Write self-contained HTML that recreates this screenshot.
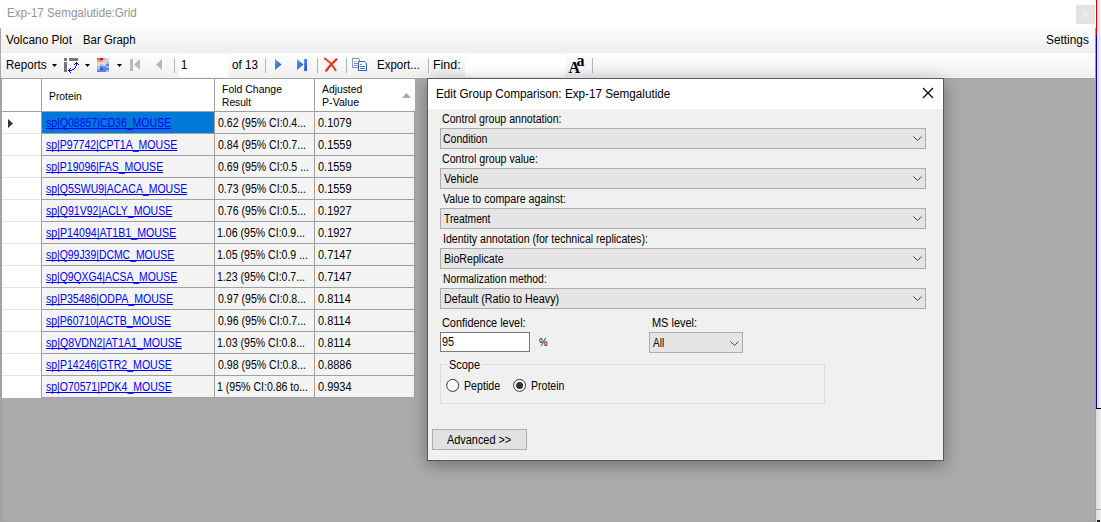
<!DOCTYPE html>
<html><head><meta charset="utf-8"><style>
html,body{margin:0;padding:0;width:1101px;height:522px;overflow:hidden;background:#fff;position:relative}
.t{position:absolute;white-space:pre;font-family:"Liberation Sans",sans-serif;transform-origin:0 0}
.r{position:absolute}
.clip{position:absolute;overflow:hidden}
</style></head><body>
<div class="r" style="left:1076px;top:5px;width:19px;height:19px;background:#e3e3e3"></div>
<svg class="r" style="left:1076px;top:5px" width="19" height="19"><path d="M7 7 L12 12 M12 7 L7 12" stroke="#f2f2f2" stroke-width="1.4"/></svg>
<div class="t" style="top:6.84px;font-size:12px;line-height:12px;color:#959595;left:7.43px;transform:scaleX(0.9679);">Exp-17 Semgalutide:Grid</div>
<div class="r" style="left:1095px;top:28px;width:1px;height:494px;background:#a0a0a0"></div>
<div class="r" style="left:1096px;top:0px;width:1px;height:35px;background:#d00000"></div>
<div class="r" style="left:1096px;top:35px;width:1px;height:373px;background:#0000c8"></div>
<div class="r" style="left:1097px;top:0px;width:4px;height:408px;background:linear-gradient(90deg,#e2e2e2,#f0f0f0)"></div>
<div class="r" style="left:1096px;top:408px;width:5px;height:1px;background:#000"></div>
<div class="r" style="left:1096px;top:409px;width:5px;height:113px;background:linear-gradient(90deg,#dcdcdc,#f0f0f0)"></div>
<div class="r" style="left:1096px;top:509px;width:5px;height:1px;background:#a8a8a8"></div>
<div class="r" style="left:1097px;top:520px;width:3px;height:2px;background:#202020"></div>
<div class="r" style="left:0px;top:28px;width:1095px;height:1px;background:rgb(251,251,251)"></div>
<div class="r" style="left:0px;top:29px;width:1095px;height:1px;background:rgb(251,251,251)"></div>
<div class="r" style="left:0px;top:30px;width:1095px;height:1px;background:rgb(250,250,250)"></div>
<div class="r" style="left:0px;top:31px;width:1095px;height:1px;background:rgb(250,250,250)"></div>
<div class="r" style="left:0px;top:32px;width:1095px;height:1px;background:rgb(249,249,249)"></div>
<div class="r" style="left:0px;top:33px;width:1095px;height:1px;background:rgb(249,249,249)"></div>
<div class="r" style="left:0px;top:34px;width:1095px;height:1px;background:rgb(248,248,248)"></div>
<div class="r" style="left:0px;top:35px;width:1095px;height:1px;background:rgb(248,248,248)"></div>
<div class="r" style="left:0px;top:36px;width:1095px;height:1px;background:rgb(248,248,248)"></div>
<div class="r" style="left:0px;top:37px;width:1095px;height:1px;background:rgb(247,247,247)"></div>
<div class="r" style="left:0px;top:38px;width:1095px;height:1px;background:rgb(247,247,247)"></div>
<div class="r" style="left:0px;top:39px;width:1095px;height:1px;background:rgb(246,246,246)"></div>
<div class="r" style="left:0px;top:40px;width:1095px;height:1px;background:rgb(246,246,246)"></div>
<div class="r" style="left:0px;top:41px;width:1095px;height:1px;background:rgb(245,245,245)"></div>
<div class="r" style="left:0px;top:42px;width:1095px;height:1px;background:rgb(245,245,245)"></div>
<div class="r" style="left:0px;top:43px;width:1095px;height:1px;background:rgb(244,244,244)"></div>
<div class="r" style="left:0px;top:44px;width:1095px;height:1px;background:rgb(243,243,243)"></div>
<div class="r" style="left:0px;top:45px;width:1095px;height:1px;background:rgb(243,243,243)"></div>
<div class="r" style="left:0px;top:46px;width:1095px;height:1px;background:rgb(242,242,242)"></div>
<div class="r" style="left:0px;top:47px;width:1095px;height:1px;background:rgb(241,241,241)"></div>
<div class="r" style="left:0px;top:48px;width:1095px;height:1px;background:rgb(241,241,241)"></div>
<div class="r" style="left:0px;top:49px;width:1095px;height:1px;background:rgb(240,240,240)"></div>
<div class="r" style="left:0px;top:50px;width:1095px;height:1px;background:rgb(239,239,239)"></div>
<div class="r" style="left:0px;top:51px;width:1095px;height:1px;background:rgb(239,239,239)"></div>
<div class="r" style="left:0px;top:52px;width:1095px;height:1px;background:rgb(238,238,238)"></div>
<div class="t" style="top:33.84px;font-size:12px;line-height:12px;color:#000;left:6.10px;transform:scaleX(0.9888);">Volcano Plot</div>
<div class="t" style="top:33.84px;font-size:12px;line-height:12px;color:#000;left:82.55px;transform:scaleX(0.9488);">Bar Graph</div>
<div class="t" style="top:33.54px;font-size:12px;line-height:12px;color:#000;left:1045.51px;transform:scaleX(0.9882);">Settings</div>
<div class="r" style="left:0px;top:53px;width:1095px;height:1px;background:rgb(252,252,252)"></div>
<div class="r" style="left:0px;top:54px;width:1095px;height:1px;background:rgb(252,252,252)"></div>
<div class="r" style="left:0px;top:55px;width:1095px;height:1px;background:rgb(251,251,251)"></div>
<div class="r" style="left:0px;top:56px;width:1095px;height:1px;background:rgb(251,251,251)"></div>
<div class="r" style="left:0px;top:57px;width:1095px;height:1px;background:rgb(250,250,250)"></div>
<div class="r" style="left:0px;top:58px;width:1095px;height:1px;background:rgb(250,250,250)"></div>
<div class="r" style="left:0px;top:59px;width:1095px;height:1px;background:rgb(250,250,250)"></div>
<div class="r" style="left:0px;top:60px;width:1095px;height:1px;background:rgb(249,249,249)"></div>
<div class="r" style="left:0px;top:61px;width:1095px;height:1px;background:rgb(249,249,249)"></div>
<div class="r" style="left:0px;top:62px;width:1095px;height:1px;background:rgb(248,248,248)"></div>
<div class="r" style="left:0px;top:63px;width:1095px;height:1px;background:rgb(248,248,248)"></div>
<div class="r" style="left:0px;top:64px;width:1095px;height:1px;background:rgb(247,247,247)"></div>
<div class="r" style="left:0px;top:65px;width:1095px;height:1px;background:rgb(247,247,247)"></div>
<div class="r" style="left:0px;top:66px;width:1095px;height:1px;background:rgb(246,246,246)"></div>
<div class="r" style="left:0px;top:67px;width:1095px;height:1px;background:rgb(246,246,246)"></div>
<div class="r" style="left:0px;top:68px;width:1095px;height:1px;background:rgb(245,245,245)"></div>
<div class="r" style="left:0px;top:69px;width:1095px;height:1px;background:rgb(244,244,244)"></div>
<div class="r" style="left:0px;top:70px;width:1095px;height:1px;background:rgb(244,244,244)"></div>
<div class="r" style="left:0px;top:71px;width:1095px;height:1px;background:rgb(243,243,243)"></div>
<div class="r" style="left:0px;top:72px;width:1095px;height:1px;background:rgb(242,242,242)"></div>
<div class="r" style="left:0px;top:73px;width:1095px;height:1px;background:rgb(242,242,242)"></div>
<div class="r" style="left:0px;top:74px;width:1095px;height:1px;background:rgb(241,241,241)"></div>
<div class="r" style="left:0px;top:75px;width:1095px;height:1px;background:rgb(240,240,240)"></div>
<div class="r" style="left:0px;top:76px;width:1095px;height:1px;background:rgb(240,240,240)"></div>
<div class="r" style="left:0px;top:77px;width:1095px;height:1px;background:rgb(246,246,246)"></div>
<div class="r" style="left:0px;top:28px;width:1px;height:50px;background:#a8a8a8"></div>
<div class="r" style="left:0px;top:78px;width:1095px;height:1px;background:#a0a0a0"></div>
<div class="t" style="top:58.64px;font-size:12px;line-height:12px;color:#000;left:6.04px;transform:scaleX(0.9630);">Reports</div>
<svg class="r" style="left:52px;top:64px" width="5" height="3"><path d="M0 0H5L2.5 3Z" fill="#000"/></svg>
<svg class="r" style="left:85px;top:64px" width="5" height="3"><path d="M0 0H5L2.5 3Z" fill="#000"/></svg>
<svg class="r" style="left:117px;top:64px" width="5" height="3"><path d="M0 0H5L2.5 3Z" fill="#000"/></svg>
<div class="r" style="left:64px;top:58px;width:3px;height:3px;background:#777"></div>
<div class="r" style="left:64px;top:62px;width:3px;height:10px;background:#777"></div>
<div class="r" style="left:69px;top:58px;width:9px;height:3px;background:#777"></div>
<svg class="r" style="left:66px;top:60px" width="14" height="14" shape-rendering="crispEdges"><g fill="#0000ff"><rect x="10" y="2" width="1" height="1"/><rect x="10" y="3" width="1" height="1"/><rect x="9" y="3" width="1" height="1"/><rect x="11" y="3" width="1" height="1"/><rect x="8" y="4" width="1" height="1"/><rect x="10" y="4" width="1" height="1"/><rect x="12" y="4" width="1" height="1"/><rect x="10" y="5" width="1" height="1"/><rect x="9" y="6" width="1" height="1"/><rect x="9" y="7" width="1" height="1"/><rect x="8" y="8" width="1" height="1"/><rect x="7" y="9" width="1" height="1"/><rect x="6" y="9" width="1" height="1"/><rect x="5" y="10" width="1" height="1"/><rect x="4" y="10" width="1" height="1"/><rect x="3" y="10" width="1" height="1"/><rect x="2" y="10" width="1" height="1"/><rect x="4" y="8" width="1" height="1"/><rect x="3" y="9" width="1" height="1"/><rect x="3" y="11" width="1" height="1"/><rect x="4" y="12" width="1" height="1"/></g></svg>
<div class="r" style="left:97px;top:58px;width:3px;height:2px;background:#e06a48"></div>
<div class="r" style="left:100px;top:58px;width:3px;height:2px;background:#c4102c"></div>
<div class="r" style="left:103px;top:58px;width:3px;height:2px;background:#f4a888"></div>
<div class="r" style="left:106px;top:58px;width:3px;height:2px;background:#dcdcdc"></div>
<div class="r" style="left:97px;top:60px;width:3px;height:2px;background:#f09878"></div>
<div class="r" style="left:100px;top:60px;width:3px;height:2px;background:#f09878"></div>
<div class="r" style="left:103px;top:60px;width:3px;height:2px;background:#f8c8b0"></div>
<div class="r" style="left:106px;top:60px;width:3px;height:2px;background:#c4d8f8"></div>
<div class="r" style="left:97px;top:62px;width:3px;height:2px;background:#e8d4cc"></div>
<div class="r" style="left:100px;top:62px;width:3px;height:2px;background:#dcdcdc"></div>
<div class="r" style="left:103px;top:62px;width:3px;height:2px;background:#dcdcdc"></div>
<div class="r" style="left:106px;top:62px;width:3px;height:2px;background:#a8c4f4"></div>
<div class="r" style="left:97px;top:64px;width:3px;height:2px;background:#dcdcdc"></div>
<div class="r" style="left:100px;top:64px;width:3px;height:2px;background:#a4c0f4"></div>
<div class="r" style="left:103px;top:64px;width:3px;height:2px;background:#c4d8f8"></div>
<div class="r" style="left:106px;top:64px;width:3px;height:2px;background:#5484e4"></div>
<div class="r" style="left:97px;top:66px;width:3px;height:2px;background:#a4c0f4"></div>
<div class="r" style="left:100px;top:66px;width:3px;height:2px;background:#5484e4"></div>
<div class="r" style="left:103px;top:66px;width:3px;height:2px;background:#6890e8"></div>
<div class="r" style="left:106px;top:66px;width:3px;height:2px;background:#a4c0f4"></div>
<div class="r" style="left:97px;top:68px;width:3px;height:2px;background:#94b8f4"></div>
<div class="r" style="left:100px;top:68px;width:3px;height:2px;background:#3454c8"></div>
<div class="r" style="left:103px;top:68px;width:3px;height:2px;background:#6a84c4"></div>
<div class="r" style="left:106px;top:68px;width:3px;height:2px;background:#5484e4"></div>
<div class="r" style="left:97px;top:70px;width:3px;height:2px;background:#5484e4"></div>
<div class="r" style="left:100px;top:70px;width:3px;height:2px;background:#5484e4"></div>
<div class="r" style="left:103px;top:70px;width:3px;height:2px;background:#5484e4"></div>
<div class="r" style="left:106px;top:70px;width:3px;height:2px;background:#a4c0f4"></div>
<svg class="r" style="left:129px;top:58px" width="36" height="14"><rect x="1" y="1" width="3" height="12" fill="#b8b8b8"/><path d="M5 6.5 L11 1 V12 Z" fill="#b8b8b8"/><path d="M27 6.5 L33 1 V12 Z" fill="#b8b8b8"/></svg>
<div class="r" style="left:174px;top:58px;width:1px;height:15px;background:#b4b4b4"></div>
<div class="r" style="left:178px;top:54px;width:50px;height:23px;background:#fff"></div>
<div class="t" style="top:58.54px;font-size:12px;line-height:12px;color:#000;left:180.80px;">1</div>
<div class="t" style="top:58.54px;font-size:12px;line-height:12px;color:#000;left:232.21px;transform:scaleX(0.9709);">of 13</div>
<div class="r" style="left:265px;top:58px;width:1px;height:15px;background:#b4b4b4"></div>
<svg class="r" style="left:274px;top:58px" width="36" height="14"><defs><linearGradient id="bg1" x1="0" y1="0" x2="1" y2="1"><stop offset="0" stop-color="#6aa0f0"/><stop offset="1" stop-color="#1848c0"/></linearGradient></defs><path d="M1 1 L7.5 6.5 L1 12 Z" fill="url(#bg1)"/><path d="M23 1 L29.5 6.5 L23 12 Z" fill="url(#bg1)"/><rect x="30" y="1" width="3" height="12" fill="url(#bg1)"/></svg>
<div class="r" style="left:317px;top:58px;width:1px;height:15px;background:#b4b4b4"></div>
<svg class="r" style="left:323px;top:57px" width="15" height="16"><path d="M1.8 1.5 Q8.5 6 12.6 13.2" stroke="#f03818" stroke-width="2" fill="none" stroke-linecap="round"/><path d="M13.4 2.4 Q8 7 3.2 13.6" stroke="#f03010" stroke-width="2.3" fill="none" stroke-linecap="round"/></svg>
<div class="r" style="left:346px;top:58px;width:1px;height:15px;background:#b4b4b4"></div>
<svg class="r" style="left:352px;top:58px" width="16" height="14" shape-rendering="crispEdges"><path d="M0.5 0.5 H6.5 L7.5 1.5 V9.5 H0.5 Z" fill="#fcfcfc" stroke="#8494b4"/><rect x="2" y="3" width="2" height="1" fill="#8ab0e8"/><rect x="2" y="5" width="5" height="1" fill="#6a98e0"/><rect x="2" y="7" width="5" height="1" fill="#6a98e0"/><path d="M6.5 3.5 H12.5 L14.5 5.5 V12.5 H6.5 Z" fill="#fcfcfc" stroke="#3a62c0"/><rect x="8" y="6" width="2" height="1" fill="#6a98e0"/><rect x="8" y="8" width="5" height="1" fill="#4a7ad8"/><rect x="8" y="10" width="5" height="1" fill="#4a7ad8"/></svg>
<div class="t" style="top:58.64px;font-size:12px;line-height:12px;color:#000;left:376.74px;transform:scaleX(0.9591);">Export...</div>
<div class="r" style="left:428px;top:58px;width:1px;height:15px;background:#b4b4b4"></div>
<div class="t" style="top:58.64px;font-size:12px;line-height:12px;color:#000;left:432.97px;transform:scaleX(1.0343);">Find:</div>
<div class="r" style="left:465px;top:54px;width:100px;height:23px;background:#fff"></div>
<div class="t" style="left:568.5px;top:59.5px;font-family:'Liberation Serif',serif;font-weight:bold;font-size:16px;line-height:16px;color:#000">A</div>
<div class="t" style="left:576.5px;top:52.5px;font-family:'Liberation Serif',serif;font-weight:bold;font-size:16px;line-height:16px;color:#000">a</div>
<div class="r" style="left:592px;top:58px;width:1px;height:15px;background:#b4b4b4"></div>
<div class="r" style="left:0px;top:79px;width:1095px;height:443px;background:#ababab"></div>
<div class="r" style="left:0px;top:79px;width:2px;height:443px;background:#a2a2a2"></div>
<div class="r" style="left:0px;top:521px;width:1095px;height:1px;background:#a4a4a4"></div>
<div class="r" style="left:2px;top:79px;width:413px;height:32px;background:#fff"></div>
<div class="r" style="left:2px;top:111px;width:413px;height:1px;background:#a0a0a0"></div>
<div class="r" style="left:41px;top:79px;width:1px;height:318px;background:#a0a0a0"></div>
<div class="r" style="left:214px;top:79px;width:1px;height:318px;background:#a0a0a0"></div>
<div class="r" style="left:314px;top:79px;width:1px;height:318px;background:#a0a0a0"></div>
<div class="r" style="left:414px;top:112px;width:1px;height:285px;background:#a0a0a0"></div>
<div class="t" style="top:91.07px;font-size:11.5px;line-height:11.5px;color:#000;left:49.00px;transform:scaleX(0.9007);">Protein</div>
<div class="t" style="top:84.07px;font-size:11.5px;line-height:11.5px;color:#000;left:221.69px;transform:scaleX(0.9105);">Fold Change</div>
<div class="t" style="top:96.67px;font-size:11.5px;line-height:11.5px;color:#000;left:221.71px;transform:scaleX(0.8889);">Result</div>
<div class="t" style="top:84.07px;font-size:11.5px;line-height:11.5px;color:#000;left:322.30px;transform:scaleX(0.8977);">Adjusted</div>
<div class="t" style="top:96.67px;font-size:11.5px;line-height:11.5px;color:#000;left:321.68px;transform:scaleX(0.9247);">P-Value</div>
<svg class="r" style="left:402px;top:93px" width="10" height="5"><path d="M0 5 L4.5 0 L9 5 Z" fill="#a8a8a8"/></svg>
<div class="r" style="left:2px;top:112px;width:39px;height:21px;background:#fff"></div>
<div class="r" style="left:42px;top:112px;width:172px;height:21px;background:#0078d7"></div>
<div class="r" style="left:215px;top:112px;width:99px;height:21px;background:#f4f4f4"></div>
<div class="r" style="left:315px;top:112px;width:99px;height:21px;background:#f4f4f4"></div>
<div class="r" style="left:2px;top:133px;width:39px;height:1px;background:#e4e4e4"></div>
<div class="r" style="left:42px;top:133px;width:372px;height:1px;background:#a0a0a0"></div>
<div class="t" style="top:116.54px;font-size:12px;line-height:12px;color:#0000ff;left:45.58px;transform:scaleX(0.8752);text-decoration:underline;text-decoration-skip-ink:none;text-underline-offset:1px">sp|Q08857|CD36_MOUSE</div>
<div class="t" style="top:116.74px;font-size:12px;line-height:12px;color:#000;left:217.56px;transform:scaleX(0.8800);">0.62 (95% CI:0.4...</div>
<div class="t" style="top:116.74px;font-size:12px;line-height:12px;color:#000;left:317.74px;transform:scaleX(0.9140);">0.1079</div>
<div class="r" style="left:2px;top:134px;width:39px;height:21px;background:#fff"></div>
<div class="r" style="left:42px;top:134px;width:172px;height:21px;background:#f4f4f4"></div>
<div class="r" style="left:215px;top:134px;width:99px;height:21px;background:#f4f4f4"></div>
<div class="r" style="left:315px;top:134px;width:99px;height:21px;background:#f4f4f4"></div>
<div class="r" style="left:2px;top:155px;width:39px;height:1px;background:#e4e4e4"></div>
<div class="r" style="left:42px;top:155px;width:372px;height:1px;background:#a0a0a0"></div>
<div class="t" style="top:138.54px;font-size:12px;line-height:12px;color:#0000ff;left:45.58px;transform:scaleX(0.8765);text-decoration:underline;text-decoration-skip-ink:none;text-underline-offset:1px">sp|P97742|CPT1A_MOUSE</div>
<div class="t" style="top:138.74px;font-size:12px;line-height:12px;color:#000;left:217.56px;transform:scaleX(0.8800);">0.84 (95% CI:0.7...</div>
<div class="t" style="top:138.74px;font-size:12px;line-height:12px;color:#000;left:317.74px;transform:scaleX(0.9140);">0.1559</div>
<div class="r" style="left:2px;top:156px;width:39px;height:21px;background:#fff"></div>
<div class="r" style="left:42px;top:156px;width:172px;height:21px;background:#f4f4f4"></div>
<div class="r" style="left:215px;top:156px;width:99px;height:21px;background:#f4f4f4"></div>
<div class="r" style="left:315px;top:156px;width:99px;height:21px;background:#f4f4f4"></div>
<div class="r" style="left:2px;top:177px;width:39px;height:1px;background:#e4e4e4"></div>
<div class="r" style="left:42px;top:177px;width:372px;height:1px;background:#a0a0a0"></div>
<div class="t" style="top:160.54px;font-size:12px;line-height:12px;color:#0000ff;left:45.58px;transform:scaleX(0.8767);text-decoration:underline;text-decoration-skip-ink:none;text-underline-offset:1px">sp|P19096|FAS_MOUSE</div>
<div class="t" style="top:160.74px;font-size:12px;line-height:12px;color:#000;left:217.56px;transform:scaleX(0.8800);">0.69 (95% CI:0.5 ...</div>
<div class="t" style="top:160.74px;font-size:12px;line-height:12px;color:#000;left:317.74px;transform:scaleX(0.9140);">0.1559</div>
<div class="r" style="left:2px;top:178px;width:39px;height:21px;background:#fff"></div>
<div class="r" style="left:42px;top:178px;width:172px;height:21px;background:#f4f4f4"></div>
<div class="r" style="left:215px;top:178px;width:99px;height:21px;background:#f4f4f4"></div>
<div class="r" style="left:315px;top:178px;width:99px;height:21px;background:#f4f4f4"></div>
<div class="r" style="left:2px;top:199px;width:39px;height:1px;background:#e4e4e4"></div>
<div class="r" style="left:42px;top:199px;width:372px;height:1px;background:#a0a0a0"></div>
<div class="t" style="top:182.54px;font-size:12px;line-height:12px;color:#0000ff;left:45.58px;transform:scaleX(0.8733);text-decoration:underline;text-decoration-skip-ink:none;text-underline-offset:1px">sp|Q5SWU9|ACACA_MOUSE</div>
<div class="t" style="top:182.74px;font-size:12px;line-height:12px;color:#000;left:217.56px;transform:scaleX(0.8800);">0.73 (95% CI:0.5...</div>
<div class="t" style="top:182.74px;font-size:12px;line-height:12px;color:#000;left:317.74px;transform:scaleX(0.9140);">0.1559</div>
<div class="r" style="left:2px;top:200px;width:39px;height:21px;background:#fff"></div>
<div class="r" style="left:42px;top:200px;width:172px;height:21px;background:#f4f4f4"></div>
<div class="r" style="left:215px;top:200px;width:99px;height:21px;background:#f4f4f4"></div>
<div class="r" style="left:315px;top:200px;width:99px;height:21px;background:#f4f4f4"></div>
<div class="r" style="left:2px;top:221px;width:39px;height:1px;background:#e4e4e4"></div>
<div class="r" style="left:42px;top:221px;width:372px;height:1px;background:#a0a0a0"></div>
<div class="t" style="top:204.54px;font-size:12px;line-height:12px;color:#0000ff;left:45.58px;transform:scaleX(0.8761);text-decoration:underline;text-decoration-skip-ink:none;text-underline-offset:1px">sp|Q91V92|ACLY_MOUSE</div>
<div class="t" style="top:204.74px;font-size:12px;line-height:12px;color:#000;left:217.56px;transform:scaleX(0.8800);">0.76 (95% CI:0.5...</div>
<div class="t" style="top:204.74px;font-size:12px;line-height:12px;color:#000;left:317.74px;transform:scaleX(0.9140);">0.1927</div>
<div class="r" style="left:2px;top:222px;width:39px;height:21px;background:#fff"></div>
<div class="r" style="left:42px;top:222px;width:172px;height:21px;background:#f4f4f4"></div>
<div class="r" style="left:215px;top:222px;width:99px;height:21px;background:#f4f4f4"></div>
<div class="r" style="left:315px;top:222px;width:99px;height:21px;background:#f4f4f4"></div>
<div class="r" style="left:2px;top:243px;width:39px;height:1px;background:#e4e4e4"></div>
<div class="r" style="left:42px;top:243px;width:372px;height:1px;background:#a0a0a0"></div>
<div class="t" style="top:226.54px;font-size:12px;line-height:12px;color:#0000ff;left:45.58px;transform:scaleX(0.8877);text-decoration:underline;text-decoration-skip-ink:none;text-underline-offset:1px">sp|P14094|AT1B1_MOUSE</div>
<div class="t" style="top:226.74px;font-size:12px;line-height:12px;color:#000;left:217.12px;transform:scaleX(0.8800);">1.06 (95% CI:0.9...</div>
<div class="t" style="top:226.74px;font-size:12px;line-height:12px;color:#000;left:317.74px;transform:scaleX(0.9140);">0.1927</div>
<div class="r" style="left:2px;top:244px;width:39px;height:21px;background:#fff"></div>
<div class="r" style="left:42px;top:244px;width:172px;height:21px;background:#f4f4f4"></div>
<div class="r" style="left:215px;top:244px;width:99px;height:21px;background:#f4f4f4"></div>
<div class="r" style="left:315px;top:244px;width:99px;height:21px;background:#f4f4f4"></div>
<div class="r" style="left:2px;top:265px;width:39px;height:1px;background:#e4e4e4"></div>
<div class="r" style="left:42px;top:265px;width:372px;height:1px;background:#a0a0a0"></div>
<div class="t" style="top:248.54px;font-size:12px;line-height:12px;color:#0000ff;left:45.58px;transform:scaleX(0.8680);text-decoration:underline;text-decoration-skip-ink:none;text-underline-offset:1px">sp|Q99J39|DCMC_MOUSE</div>
<div class="t" style="top:248.74px;font-size:12px;line-height:12px;color:#000;left:217.12px;transform:scaleX(0.8800);">1.05 (95% CI:0.9 ...</div>
<div class="t" style="top:248.74px;font-size:12px;line-height:12px;color:#000;left:317.74px;transform:scaleX(0.9140);">0.7147</div>
<div class="r" style="left:2px;top:266px;width:39px;height:21px;background:#fff"></div>
<div class="r" style="left:42px;top:266px;width:172px;height:21px;background:#f4f4f4"></div>
<div class="r" style="left:215px;top:266px;width:99px;height:21px;background:#f4f4f4"></div>
<div class="r" style="left:315px;top:266px;width:99px;height:21px;background:#f4f4f4"></div>
<div class="r" style="left:2px;top:287px;width:39px;height:1px;background:#e4e4e4"></div>
<div class="r" style="left:42px;top:287px;width:372px;height:1px;background:#a0a0a0"></div>
<div class="t" style="top:270.54px;font-size:12px;line-height:12px;color:#0000ff;left:45.58px;transform:scaleX(0.8649);text-decoration:underline;text-decoration-skip-ink:none;text-underline-offset:1px">sp|Q9QXG4|ACSA_MOUSE</div>
<div class="t" style="top:270.74px;font-size:12px;line-height:12px;color:#000;left:217.12px;transform:scaleX(0.8800);">1.23 (95% CI:0.7...</div>
<div class="t" style="top:270.74px;font-size:12px;line-height:12px;color:#000;left:317.74px;transform:scaleX(0.9140);">0.7147</div>
<div class="r" style="left:2px;top:288px;width:39px;height:21px;background:#fff"></div>
<div class="r" style="left:42px;top:288px;width:172px;height:21px;background:#f4f4f4"></div>
<div class="r" style="left:215px;top:288px;width:99px;height:21px;background:#f4f4f4"></div>
<div class="r" style="left:315px;top:288px;width:99px;height:21px;background:#f4f4f4"></div>
<div class="r" style="left:2px;top:309px;width:39px;height:1px;background:#e4e4e4"></div>
<div class="r" style="left:42px;top:309px;width:372px;height:1px;background:#a0a0a0"></div>
<div class="t" style="top:292.54px;font-size:12px;line-height:12px;color:#0000ff;left:45.58px;transform:scaleX(0.8810);text-decoration:underline;text-decoration-skip-ink:none;text-underline-offset:1px">sp|P35486|ODPA_MOUSE</div>
<div class="t" style="top:292.74px;font-size:12px;line-height:12px;color:#000;left:217.56px;transform:scaleX(0.8800);">0.97 (95% CI:0.8...</div>
<div class="t" style="top:292.74px;font-size:12px;line-height:12px;color:#000;left:317.74px;transform:scaleX(0.9140);">0.8114</div>
<div class="r" style="left:2px;top:310px;width:39px;height:21px;background:#fff"></div>
<div class="r" style="left:42px;top:310px;width:172px;height:21px;background:#f4f4f4"></div>
<div class="r" style="left:215px;top:310px;width:99px;height:21px;background:#f4f4f4"></div>
<div class="r" style="left:315px;top:310px;width:99px;height:21px;background:#f4f4f4"></div>
<div class="r" style="left:2px;top:331px;width:39px;height:1px;background:#e4e4e4"></div>
<div class="r" style="left:42px;top:331px;width:372px;height:1px;background:#a0a0a0"></div>
<div class="t" style="top:314.54px;font-size:12px;line-height:12px;color:#0000ff;left:45.58px;transform:scaleX(0.8752);text-decoration:underline;text-decoration-skip-ink:none;text-underline-offset:1px">sp|P60710|ACTB_MOUSE</div>
<div class="t" style="top:314.74px;font-size:12px;line-height:12px;color:#000;left:217.56px;transform:scaleX(0.8800);">0.96 (95% CI:0.7...</div>
<div class="t" style="top:314.74px;font-size:12px;line-height:12px;color:#000;left:317.74px;transform:scaleX(0.9140);">0.8114</div>
<div class="r" style="left:2px;top:332px;width:39px;height:21px;background:#fff"></div>
<div class="r" style="left:42px;top:332px;width:172px;height:21px;background:#f4f4f4"></div>
<div class="r" style="left:215px;top:332px;width:99px;height:21px;background:#f4f4f4"></div>
<div class="r" style="left:315px;top:332px;width:99px;height:21px;background:#f4f4f4"></div>
<div class="r" style="left:2px;top:353px;width:39px;height:1px;background:#e4e4e4"></div>
<div class="r" style="left:42px;top:353px;width:372px;height:1px;background:#a0a0a0"></div>
<div class="t" style="top:336.54px;font-size:12px;line-height:12px;color:#0000ff;left:45.58px;transform:scaleX(0.8858);text-decoration:underline;text-decoration-skip-ink:none;text-underline-offset:1px">sp|Q8VDN2|AT1A1_MOUSE</div>
<div class="t" style="top:336.74px;font-size:12px;line-height:12px;color:#000;left:217.12px;transform:scaleX(0.8800);">1.03 (95% CI:0.8...</div>
<div class="t" style="top:336.74px;font-size:12px;line-height:12px;color:#000;left:317.74px;transform:scaleX(0.9140);">0.8114</div>
<div class="r" style="left:2px;top:354px;width:39px;height:21px;background:#fff"></div>
<div class="r" style="left:42px;top:354px;width:172px;height:21px;background:#f4f4f4"></div>
<div class="r" style="left:215px;top:354px;width:99px;height:21px;background:#f4f4f4"></div>
<div class="r" style="left:315px;top:354px;width:99px;height:21px;background:#f4f4f4"></div>
<div class="r" style="left:2px;top:375px;width:39px;height:1px;background:#e4e4e4"></div>
<div class="r" style="left:42px;top:375px;width:372px;height:1px;background:#a0a0a0"></div>
<div class="t" style="top:358.54px;font-size:12px;line-height:12px;color:#0000ff;left:45.58px;transform:scaleX(0.8801);text-decoration:underline;text-decoration-skip-ink:none;text-underline-offset:1px">sp|P14246|GTR2_MOUSE</div>
<div class="t" style="top:358.74px;font-size:12px;line-height:12px;color:#000;left:217.56px;transform:scaleX(0.8800);">0.98 (95% CI:0.8...</div>
<div class="t" style="top:358.74px;font-size:12px;line-height:12px;color:#000;left:317.74px;transform:scaleX(0.9140);">0.8886</div>
<div class="r" style="left:2px;top:376px;width:39px;height:21px;background:#fff"></div>
<div class="r" style="left:42px;top:376px;width:172px;height:21px;background:#f4f4f4"></div>
<div class="r" style="left:215px;top:376px;width:99px;height:21px;background:#f4f4f4"></div>
<div class="r" style="left:315px;top:376px;width:99px;height:21px;background:#f4f4f4"></div>
<div class="t" style="top:380.54px;font-size:12px;line-height:12px;color:#0000ff;left:45.58px;transform:scaleX(0.8755);text-decoration:underline;text-decoration-skip-ink:none;text-underline-offset:1px">sp|O70571|PDK4_MOUSE</div>
<div class="t" style="top:380.74px;font-size:12px;line-height:12px;color:#000;left:217.12px;transform:scaleX(0.8800);">1 (95% CI:0.86 to...</div>
<div class="t" style="top:380.74px;font-size:12px;line-height:12px;color:#000;left:317.74px;transform:scaleX(0.9140);">0.9934</div>
<div class="r" style="left:2px;top:397px;width:39px;height:1px;background:#fff"></div>
<div class="r" style="left:41px;top:397px;width:374px;height:1px;background:#a4a4a4"></div>
<svg class="r" style="left:8px;top:119px" width="6" height="10"><path d="M0 0 L5 4.5 L0 9 Z" fill="#333"/></svg>
<div class="clip" style="left:0;top:0;width:1095px;height:522px">
<div class="r" style="left:427px;top:78px;width:517px;height:383px;box-shadow:0 4px 16px rgba(0,0,0,0.35)"></div>
</div>
<div class="r" style="left:427px;top:78px;width:517px;height:383px;background:#f0f0f0;border:1px solid #5a5a5a;box-sizing:border-box"></div>
<div class="r" style="left:428px;top:79px;width:515px;height:30px;background:#fff"></div>
<div class="t" style="top:87.54px;font-size:12px;line-height:12px;color:#000;left:436.02px;transform:scaleX(0.9759);">Edit Group Comparison: Exp-17 Semgalutide</div>
<svg class="r" style="left:922px;top:87px" width="12" height="12"><path d="M1 1 L11 11 M11 1 L1 11" stroke="#000" stroke-width="1.15"/></svg>
<div class="t" style="top:113.44px;font-size:12px;line-height:12px;color:#000;left:442.26px;transform:scaleX(0.8828);">Control group annotation:</div>
<div class="r" style="left:440px;top:128px;width:486px;height:21px;background:#e5e5e5;border:1px solid #adadad;box-sizing:border-box"></div>
<div class="t" style="top:132.64px;font-size:12px;line-height:12px;color:#000;left:443.26px;transform:scaleX(0.8768);">Condition</div>
<svg class="r" style="left:912.5px;top:136px" width="9" height="6"><path d="M0.5 0.5 L4.5 4.5 L8.5 0.5" stroke="#444" stroke-width="1" fill="none"/></svg>
<div class="t" style="top:153.44px;font-size:12px;line-height:12px;color:#000;left:442.46px;transform:scaleX(0.8873);">Control group value:</div>
<div class="r" style="left:440px;top:168px;width:486px;height:21px;background:#e5e5e5;border:1px solid #adadad;box-sizing:border-box"></div>
<div class="t" style="top:172.64px;font-size:12px;line-height:12px;color:#000;left:444.20px;transform:scaleX(0.8863);">Vehicle</div>
<svg class="r" style="left:912.5px;top:176px" width="9" height="6"><path d="M0.5 0.5 L4.5 4.5 L8.5 0.5" stroke="#444" stroke-width="1" fill="none"/></svg>
<div class="t" style="top:193.44px;font-size:12px;line-height:12px;color:#000;left:443.30px;transform:scaleX(0.8873);">Value to compare against:</div>
<div class="r" style="left:440px;top:208px;width:486px;height:21px;background:#e5e5e5;border:1px solid #adadad;box-sizing:border-box"></div>
<div class="t" style="top:212.64px;font-size:12px;line-height:12px;color:#000;left:444.49px;transform:scaleX(0.8556);">Treatment</div>
<svg class="r" style="left:912.5px;top:216px" width="9" height="6"><path d="M0.5 0.5 L4.5 4.5 L8.5 0.5" stroke="#444" stroke-width="1" fill="none"/></svg>
<div class="t" style="top:233.44px;font-size:12px;line-height:12px;color:#000;left:443.12px;transform:scaleX(0.8826);">Identity annotation (for technical replicates):</div>
<div class="r" style="left:440px;top:248px;width:486px;height:21px;background:#e5e5e5;border:1px solid #adadad;box-sizing:border-box"></div>
<div class="t" style="top:252.64px;font-size:12px;line-height:12px;color:#000;left:443.72px;transform:scaleX(0.8848);">BioReplicate</div>
<svg class="r" style="left:912.5px;top:256px" width="9" height="6"><path d="M0.5 0.5 L4.5 4.5 L8.5 0.5" stroke="#444" stroke-width="1" fill="none"/></svg>
<div class="t" style="top:273.44px;font-size:12px;line-height:12px;color:#000;left:443.14px;transform:scaleX(0.8644);">Normalization method:</div>
<div class="r" style="left:440px;top:288px;width:486px;height:21px;background:#e5e5e5;border:1px solid #adadad;box-sizing:border-box"></div>
<div class="t" style="top:292.64px;font-size:12px;line-height:12px;color:#000;left:443.70px;transform:scaleX(0.8998);">Default (Ratio to Heavy)</div>
<svg class="r" style="left:912.5px;top:296px" width="9" height="6"><path d="M0.5 0.5 L4.5 4.5 L8.5 0.5" stroke="#444" stroke-width="1" fill="none"/></svg>
<div class="t" style="top:316.64px;font-size:12px;line-height:12px;color:#000;left:442.05px;transform:scaleX(0.9083);">Confidence level:</div>
<div class="r" style="left:440px;top:332px;width:90px;height:20px;background:#fff;border:1px solid #7a7a7a;box-sizing:border-box"></div>
<div class="t" style="top:335.64px;font-size:12px;line-height:12px;color:#000;left:442.35px;transform:scaleX(0.9000);">95</div>
<div class="t" style="top:338.34px;font-size:10px;line-height:10px;color:#000;left:538.76px;transform:scaleX(0.9697);">%</div>
<div class="t" style="top:316.74px;font-size:12px;line-height:12px;color:#000;left:651.59px;transform:scaleX(0.9122);">MS level:</div>
<div class="r" style="left:649px;top:332px;width:94px;height:21px;background:#e5e5e5;border:1px solid #adadad;box-sizing:border-box"></div>
<div class="t" style="top:336.64px;font-size:12px;line-height:12px;color:#000;left:653.00px;transform:scaleX(0.8320);">All</div>
<svg class="r" style="left:729.5px;top:340.5px" width="9" height="6"><path d="M0.5 0.5 L4.5 4.5 L8.5 0.5" stroke="#444" stroke-width="1" fill="none"/></svg>
<div class="r" style="left:440px;top:364px;width:385px;height:40px;border:1px solid #dcdcdc;box-sizing:border-box"></div>
<div class="r" style="left:447px;top:360px;width:35px;height:8px;background:#f0f0f0"></div>
<div class="t" style="top:359.24px;font-size:12px;line-height:12px;color:#000;left:448.74px;transform:scaleX(0.9121);">Scope</div>
<svg class="r" style="left:445px;top:378px" width="16" height="16"><circle cx="7.7" cy="7.4" r="6" fill="#fff" stroke="#333" stroke-width="1"/></svg>
<svg class="r" style="left:512px;top:378px" width="16" height="16"><circle cx="7.6" cy="7.4" r="6" fill="#fff" stroke="#333" stroke-width="1"/><circle cx="7.6" cy="7.4" r="3.5" fill="#333"/></svg>
<div class="t" style="top:380.44px;font-size:12px;line-height:12px;color:#000;left:464.41px;transform:scaleX(0.8866);">Peptide</div>
<div class="t" style="top:380.44px;font-size:12px;line-height:12px;color:#000;left:531.42px;transform:scaleX(0.8772);">Protein</div>
<div class="r" style="left:432px;top:429px;width:95px;height:21px;background:#e1e1e1;border:1px solid #adadad;box-sizing:border-box"></div>
<div class="t" style="top:433.74px;font-size:12px;line-height:12px;color:#000;left:447.30px;transform:scaleX(0.9082);">Advanced &gt;&gt;</div>
</body></html>
